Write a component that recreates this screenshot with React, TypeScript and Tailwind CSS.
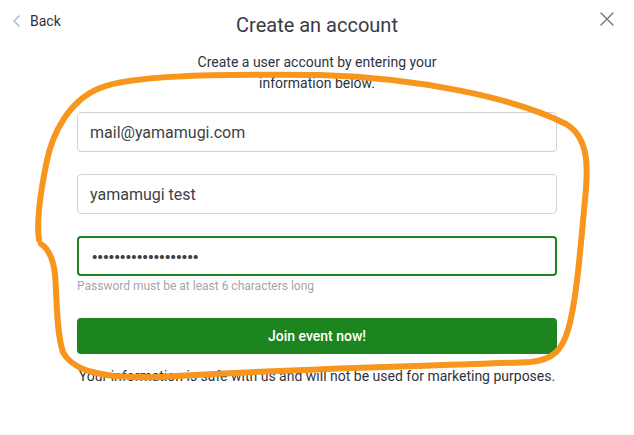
import React from "react";

const Annotation: React.FC = () => (
  <svg
    className="absolute inset-0 pointer-events-none"
    width={634}
    height={435}
    viewBox="0 0 634 435"
    fill="none"
  >
    <path
      d="M39 240 C36 220, 41 190, 46 165 C52 132, 70 100, 100 88 C130 76, 200 74, 320 75 C420 78, 515 98, 566 124 C590 138, 588 170, 585 200 C581 240, 577 300, 568 330 C562 350, 553 360, 530 362 C440 366, 300 368, 160 377 C100 379, 72 370, 63 352 C56 332, 57 295, 55 274 C53 258, 49 249, 41 244"
      stroke="#f7951d"
      strokeWidth={6}
      strokeLinecap="round"
      strokeLinejoin="round"
    />
  </svg>
);

export default function App() {
  return (
    <div className="relative w-[634px] h-[435px] bg-white font-['Roboto',sans-serif] text-[#3f3f46] overflow-hidden">
      {/* header */}
      <div className="grid grid-cols-[1fr_auto_1fr] pt-[12px] px-[13px]">
        <div className="flex items-center gap-[10px] h-[18px] text-[14px] text-[#2d3340]">
          <svg width="7" height="12" viewBox="0 0 7 12" fill="none">
            <path d="M6 1 L1 6 L6 11" stroke="#a9b4c4" strokeWidth="1.4" strokeLinecap="round" strokeLinejoin="round" />
          </svg>
          <span>Back</span>
        </div>
        <h1 className="text-[20px] leading-[26px] text-[#3a3b45]">Create an account</h1>
        <div className="flex justify-end pr-[7px]">
          <svg width="14" height="14" viewBox="0 0 14 14" fill="none">
            <path d="M1 1 L13 13 M13 1 L1 13" stroke="#7b7d85" strokeWidth="1.5" strokeLinecap="round" />
          </svg>
        </div>
      </div>

      <p className="mx-auto mt-[14px] w-[260px] text-center text-[14px] leading-[21px] text-[#2f3340]">
        Create a user account by entering your information below.
      </p>

      <form className="mx-auto mt-[18px] w-[480px] flex flex-col">
        <input
          readOnly
          defaultValue="mail@yamamugi.com"
          className="h-[40px] rounded-[4px] border border-[#cfd1d4] px-[12px] text-[16px] text-[#3f3f46] outline-none"
        />
        <input
          readOnly
          defaultValue="yamamugi test"
          className="mt-[22px] h-[40px] rounded-[4px] border border-[#cfd1d4] px-[12px] text-[16px] text-[#3f3f46] outline-none"
        />
        <input
          readOnly
          type="password"
          defaultValue="yamamugitest1234567"
          className="mt-[22px] h-[40px] rounded-[4px] border-2 border-[#1c8520] px-[12px] font-['Inter',sans-serif] text-[13px] tracking-[-1.7px] text-[#3f3f46] outline-none"
        />
        <span className="mt-[3px] text-[12px] leading-[14px] text-[#a3a6ad]">
          Password must be at least 6 characters long
        </span>
        <button
          type="button"
          className="mt-[25px] h-[36px] rounded-[4px] bg-[#1c8520] text-[14px] font-medium text-white"
        >
          Join event now!
        </button>
        <p className="mt-[12px] whitespace-nowrap text-center text-[14px] leading-[20px] text-[#2f3340]">
          Your information is safe with us and will not be used for marketing purposes.
        </p>
      </form>

      <Annotation />
    </div>
  );
}
